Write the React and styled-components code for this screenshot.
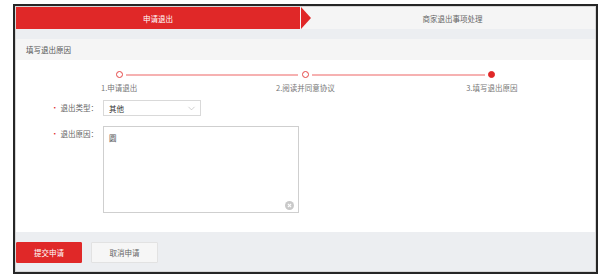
import React from 'react';
import styled, { createGlobalStyle } from 'styled-components';
import { ChevronDown } from 'lucide-react';

const GlobalStyle = createGlobalStyle`
    html, body {
        margin: 0;
        padding: 0;
        background: #fff;
    }
    body {
        font-family: "Noto Sans CJK SC", "Noto Sans", sans-serif;
        font-size: 7.5px;
        color: #666;
    }
    * {
        box-sizing: border-box;
    }
`;

const RED = '#e02828';

const Frame = styled.div`
    margin: 4px 0 0 13px;
    width: 585px;
    border: 2px solid #262626;
`;

const Inner = styled.div`
    border: 1px solid #d6d6d6;
    display: flex;
    flex-direction: column;
`;

const Tabs = styled.div`
    display: flex;
    height: 22px;
    background: #f5f5f5;
`;

const Tab = styled.div`
    position: relative;
    display: flex;
    align-items: center;
    justify-content: center;
    flex: ${p => (p.$active ? '0 0 284px' : '1')};
    padding-left: ${p => (p.$active ? '0' : '10px')};
    background: ${p => (p.$active ? RED : 'transparent')};
    color: ${p => (p.$active ? '#fff' : '#666')};

    ${p => p.$active && `
        &::after {
            content: '';
            position: absolute;
            right: -11px;
            top: 0;
            border-left: 10px solid ${RED};
            border-top: 11px solid transparent;
            border-bottom: 11px solid transparent;
        }
    `}
`;

const Band = styled.div`
    height: 10px;
    background: #eceef1;
`;

const SectionTitle = styled.div`
    height: 21px;
    line-height: 21px;
    padding-left: 10px;
    background: #f5f5f5;
    color: #555;
`;

const Body = styled.div`
    height: 172px;
    padding-top: 11px;
`;

const Steps = styled.ol`
    display: grid;
    grid-template-columns: repeat(3, 1fr);
    margin: 0 10px;
    padding: 0;
    list-style: none;
`;

const Step = styled.li`
    position: relative;
    display: flex;
    flex-direction: column;
    align-items: center;

    &:not(:last-child)::after {
        content: '';
        position: absolute;
        top: 2.5px;
        left: calc(50% + 7px);
        width: calc(100% - 14px);
        height: 2px;
        background: #f6b1b1;
    }
`;

const Dot = styled.span`
    width: 7px;
    height: 7px;
    border-radius: 50%;
    border: 1.5px solid #e54646;
    background: ${p => (p.$done ? RED : '#fff')};
    border-color: ${p => (p.$done ? RED : '#e54646')};
`;

const StepLabel = styled.span`
    margin-top: 5px;
    line-height: 10px;
    color: #777;
`;

const Form = styled.div`
    margin-top: 7px;
    display: flex;
    flex-direction: column;
    gap: 10px;
`;

const Row = styled.div`
    display: grid;
    grid-template-columns: 82px auto;
    column-gap: 5px;
    align-items: ${p => (p.$top ? 'start' : 'center')};
`;

const Label = styled.label`
    text-align: right;
    line-height: 10px;
    padding-top: ${p => (p.$top ? '3px' : '0')};
    color: #666;

    &::before {
        content: '•';
        color: ${RED};
        margin-right: 2px;
    }
`;

const Select = styled.div`
    width: 98px;
    height: 16px;
    border: 1px solid #d9d9d9;
    display: flex;
    align-items: center;
    justify-content: space-between;
    padding: 0 3px 0 5px;
    color: #333;
`;

const TextArea = styled.div`
    position: relative;
    width: 196px;
    height: 87px;
    border: 1px solid #cfcfcf;
    padding: 6px 5px;
    color: #555;
    line-height: 10px;
`;

const Clear = styled.svg`
    position: absolute;
    right: 4px;
    bottom: 2px;
`;

const Footer = styled.div`
    height: 39px;
    background: #eceef1;
    display: flex;
    align-items: flex-start;
    gap: 9px;
    padding-top: 10px;
`;

const Button = styled.button`
    width: ${p => (p.$primary ? '66px' : '67px')};
    height: 21px;
    border: 1px solid ${p => (p.$primary ? RED : '#e2e2e2')};
    border-radius: 1px;
    background: ${p => (p.$primary ? RED : '#f6f6f6')};
    color: ${p => (p.$primary ? '#fff' : '#666')};
    font-family: inherit;
    font-size: 7.5px;
    padding: 0;
`;

const steps = ['1.申请退出', '2.阅读并同意协议', '3.填写退出原因'];

export default function App() {
    return (
        <>
            <GlobalStyle />
            <Frame>
                <Inner>
                    <Tabs>
                        <Tab $active>申请退出</Tab>
                        <Tab>商家退出事项处理</Tab>
                    </Tabs>
                    <Band />
                    <SectionTitle>填写退出原因</SectionTitle>
                    <Body>
                        <Steps>
                            {steps.map((s, i) => (
                                <Step key={s}>
                                    <Dot $done={i === steps.length - 1} />
                                    <StepLabel>{s}</StepLabel>
                                </Step>
                            ))}
                        </Steps>
                        <Form>
                            <Row>
                                <Label>退出类型：</Label>
                                <Select>
                                    <span>其他</span>
                                    <ChevronDown size={11} color="#aaa" strokeWidth={1.2} />
                                </Select>
                            </Row>
                            <Row $top>
                                <Label $top>退出原因：</Label>
                                <TextArea>
                                    圆
                                    <Clear width="9" height="9" viewBox="0 0 10 10">
                                        <circle cx="5" cy="5" r="5" fill="#c9c9c9" />
                                        <path d="M3.2 3.2 L6.8 6.8 M6.8 3.2 L3.2 6.8" stroke="#fff" strokeWidth="1.2" />
                                    </Clear>
                                </TextArea>
                            </Row>
                        </Form>
                    </Body>
                    <Footer>
                        <Button $primary>提交申请</Button>
                        <Button>取消申请</Button>
                    </Footer>
                </Inner>
            </Frame>
        </>
    );
}
